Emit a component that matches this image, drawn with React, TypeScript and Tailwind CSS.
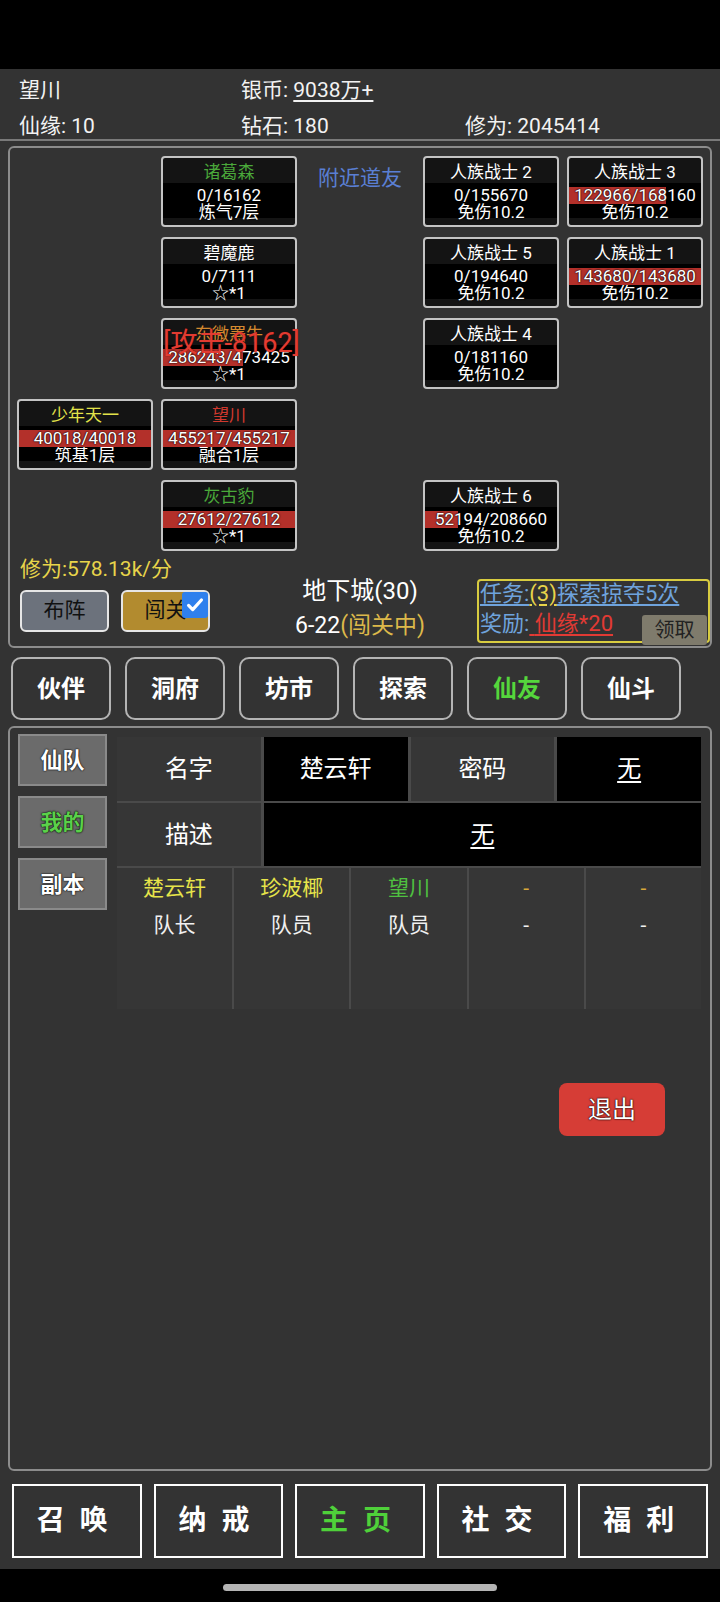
import React from "react";

type CardData = {
  col: string;
  row: string;
  name: string;
  color: string;
  hp: number;
  max: number;
  level: string;
  overlay?: string;
};

const cards: CardData[] = [
  { col: "col-start-2", row: "row-start-1", name: "诸葛森", color: "text-[#4aa83a]", hp: 0, max: 16162, level: "炼气7层" },
  { col: "col-start-4", row: "row-start-1", name: "人族战士 2", color: "text-white", hp: 0, max: 155670, level: "免伤10.2" },
  { col: "col-start-5", row: "row-start-1", name: "人族战士 3", color: "text-white", hp: 122966, max: 168160, level: "免伤10.2" },
  { col: "col-start-2", row: "row-start-2", name: "碧魔鹿", color: "text-white", hp: 0, max: 7111, level: "☆*1" },
  { col: "col-start-4", row: "row-start-2", name: "人族战士 5", color: "text-white", hp: 0, max: 194640, level: "免伤10.2" },
  { col: "col-start-5", row: "row-start-2", name: "人族战士 1", color: "text-white", hp: 143680, max: 143680, level: "免伤10.2" },
  { col: "col-start-2", row: "row-start-3", name: "东微罴牛", color: "text-[#d4892f]", hp: 286243, max: 473425, level: "☆*1", overlay: "[攻击-8162]" },
  { col: "col-start-4", row: "row-start-3", name: "人族战士 4", color: "text-white", hp: 0, max: 181160, level: "免伤10.2" },
  { col: "col-start-1", row: "row-start-4", name: "少年天一", color: "text-[#e3e34a]", hp: 40018, max: 40018, level: "筑基1层" },
  { col: "col-start-2", row: "row-start-4", name: "望川", color: "text-[#d0392e]", hp: 455217, max: 455217, level: "融合1层" },
  { col: "col-start-2", row: "row-start-5", name: "灰古豹", color: "text-[#4aa83a]", hp: 27612, max: 27612, level: "☆*1" },
  { col: "col-start-4", row: "row-start-5", name: "人族战士 6", color: "text-white", hp: 52194, max: 208660, level: "免伤10.2" },
];

function Card({ c }: { c: CardData }) {
  const pct = (c.hp / c.max) * 100;
  return (
    <div className={`${c.col} ${c.row} relative h-[71px] w-[136px] rounded-[4px] border-2 border-[#c4c4c4] bg-[#141414]`}>
      <div className={`h-[25px] pt-[3px] text-center text-[17px] leading-[22px] ${c.color}`}>{c.name}</div>
      <div className="h-[35px] bg-black pt-[4px]">
        <div className="relative h-[17px]">
          <div className="absolute left-0 top-0 h-full bg-[#b3302a]" style={{ width: `${pct}%` }} />
          <div className="relative text-center text-[17px] leading-[17px] text-white [text-shadow:0_0_2px_#000,0_0_1px_#000]">
            {c.hp}/{c.max}
          </div>
        </div>
        <div className="text-center text-[17px] leading-[17px] text-white [text-shadow:0_0_2px_#000]">{c.level}</div>
      </div>
      {c.overlay && (
        <div className="absolute left-1/2 top-[10px] -translate-x-1/2 whitespace-nowrap pl-[5px] text-[27px] leading-[27px] text-[#e23b31] [text-shadow:0_0_1px_#5a0d0a]">
          {c.overlay}
        </div>
      )}
    </div>
  );
}

const tabs = ["伙伴", "洞府", "坊市", "探索", "仙友", "仙斗"];
const navs = ["召唤", "纳戒", "主页", "社交", "福利"];

const members = [
  { name: "楚云轩", color: "text-[#e6e44a]", role: "队长" },
  { name: "珍波椰", color: "text-[#e6e44a]", role: "队员" },
  { name: "望川", color: "text-[#4fc040]", role: "队员" },
  { name: "-", color: "text-[#d8a83a]", role: "-" },
  { name: "-", color: "text-[#d8a83a]", role: "-" },
];

export default function App() {
  return (
    <div className="flex h-[1602px] w-[720px] flex-col overflow-hidden bg-black font-[family-name:Roboto,'Noto_Sans_CJK_SC',sans-serif] text-white">
      <div className="h-[69px] shrink-0 bg-black" />
      <div className="flex shrink-0 flex-col bg-[#333333]">
        {/* header */}
        <div className="h-[72px] border-b-2 border-[#7a7a7a] pl-[19px] pt-[3px] text-[21px] text-[#f2f2f2]">
          <div className="grid h-[36px] grid-cols-[222px_224px_1fr] items-center leading-[36px]">
            <div>望川</div>
            <div>
              银币: <span className="underline underline-offset-[3px]">9038万+</span>
            </div>
            <div />
          </div>
          <div className="grid h-[36px] grid-cols-[222px_224px_1fr] items-center leading-[36px]">
            <div>仙缘: 10</div>
            <div>钻石: 180</div>
            <div>修为: 2045414</div>
          </div>
        </div>

        {/* battle panel */}
        <div className="mx-[8px] mt-[5px] h-[502px] rounded-[6px] border-2 border-[#8c8c8c] bg-[#333333]">
          <div className="grid grid-cols-[136px_136px_110px_136px_136px] grid-rows-[71px_71px_71px_71px_71px] gap-x-[8px] gap-y-[10px] pl-[7px] pt-[8px]">
            {cards.map((c, i) => (
              <Card key={i} c={c} />
            ))}
            <div className="col-start-3 row-start-1 whitespace-nowrap pt-[7px] text-center text-[21px] leading-[30px] text-[#5a7fd4]">
              附近道友
            </div>
          </div>
          <div className="flex h-[95px]">
            <div className="ml-[10px] w-[223px]">
              <div className="mt-[6px] h-[24px] text-[21px] leading-[24px] text-[#e8d44a]">修为:578.13k/分</div>
              <div className="mt-[9px] flex gap-[12px]">
                <div className="flex h-[42px] w-[89px] items-center justify-center rounded-[6px] border-2 border-[#e6e6e6] bg-[#6c727c] text-[21px] text-[#111]">
                  布阵
                </div>
                <div className="relative flex h-[42px] w-[89px] items-center justify-center rounded-[6px] border-2 border-[#e6e6e6] bg-[#b28b2f] text-[21px] text-[#111]">
                  闯关
                  <div className="absolute right-0 top-0 flex h-[26px] w-[26px] items-center justify-center rounded-[3px] bg-[#2f80ed]">
                    <svg viewBox="0 0 24 24" className="h-[22px] w-[22px]" fill="none" stroke="white" strokeWidth="3.5" strokeLinecap="round" strokeLinejoin="round">
                      <path d="M5 12.5l4.5 4.5L19 6.5" />
                    </svg>
                  </div>
                </div>
              </div>
            </div>
            <div className="w-[234px] text-center">
              <div className="mt-[25px] h-[30px] text-[24px] leading-[30px]">地下城(30)</div>
              <div className="mt-[5px] h-[30px] text-[23px] leading-[30px]">
                6-22<span className="text-[#dcb84a]">(闯关中)</span>
              </div>
            </div>
            <div className="mt-[28px] h-[64px] w-[233px] rounded-[4px] border-2 border-[#d8cc40] pl-[1px] text-[22px]">
              <div className="h-[26px] whitespace-nowrap leading-[26px]">
                <span className="text-[#6fa3dc] underline underline-offset-[3px]">任务:</span>
                <span className="text-[#e8d44a] underline underline-offset-[3px]">(3)</span>
                <span className="text-[#6fa3dc] underline underline-offset-[3px]">探索掠夺5次</span>
              </div>
              <div className="flex h-[34px] items-center justify-between">
                <div className="whitespace-nowrap leading-[30px]">
                  <span className="text-[#6fa3dc]">奖励:</span>
                  <span className="text-[#e23a34] underline underline-offset-[3px]">{"\u00a0"}仙缘*20</span>
                </div>
                <div className="mb-[-4px] mr-[1px] flex h-[30px] w-[65px] shrink-0 items-center justify-center self-end rounded-[3px] bg-[#7f7b6c] text-[20px] text-[#222]">
                  领取
                </div>
              </div>
            </div>
          </div>
        </div>

        {/* tabs */}
        <div className="mt-[9px] flex h-[63px] gap-[14px] pl-[11px]">
          {tabs.map((t) => (
            <div
              key={t}
              className={`flex h-[63px] w-[100px] items-center justify-center rounded-[10px] border-2 border-[#b4b4b4] bg-[#333333] text-[24px] font-bold ${
                t === "仙友" ? "text-[#55d63c]" : "text-white"
              }`}
            >
              {t}
            </div>
          ))}
        </div>

        {/* main panel */}
        <div className="mx-[8px] mt-[6px] flex h-[745px] rounded-[6px] border-2 border-[#8c8c8c] bg-[#333333]">
          <div className="flex flex-col gap-[10px] pl-[8px] pt-[6px]">
            {["仙队", "我的", "副本"].map((s) => (
              <div
                key={s}
                className={`flex h-[52px] w-[89px] items-center justify-center border-2 border-[#8a8a8a] bg-[#6b6b6b] text-[22px] font-bold [text-shadow:0_0_2px_#000,0_0_1px_#000] ${
                  s === "我的" ? "text-[#5bd04a]" : "text-white"
                }`}
              >
                {s}
              </div>
            ))}
          </div>
          <div className="ml-[10px] w-[584px] pt-[9px]">
            <div className="flex flex-col gap-[2px] bg-[#4a4a4a] text-[24px]">
              <div className="grid h-[64px] grid-cols-4 gap-[3px]">
                <div className="flex items-center justify-center bg-[#363636]">名字</div>
                <div className="flex items-center justify-center bg-black">楚云轩</div>
                <div className="flex items-center justify-center bg-[#363636]">密码</div>
                <div className="flex items-center justify-center bg-black underline underline-offset-[4px]">无</div>
              </div>
              <div className="grid h-[63px] grid-cols-[143.75px_1fr] gap-[3px]">
                <div className="flex items-center justify-center bg-[#363636]">描述</div>
                <div className="flex items-center justify-center bg-black underline underline-offset-[4px]">无</div>
              </div>
              <div className="grid h-[141px] grid-cols-5 gap-[2px] text-[21px]">
                {members.map((m, i) => (
                  <div key={i} className="bg-[#363636] pt-[4px] text-center">
                    <div className={`h-[33px] leading-[33px] ${m.color}`}>{m.name}</div>
                    <div className="h-[40px] leading-[40px] text-[#f0f0f0]">{m.role}</div>
                  </div>
                ))}
              </div>
            </div>
            <div className="mt-[74px] flex justify-end pr-[36px]">
              <div className="flex h-[53px] w-[106px] items-center justify-center rounded-[8px] bg-[#d63d36] text-[24px] text-white [text-shadow:0_0_2px_#000,0_0_1px_#000]">
                退出
              </div>
            </div>
          </div>
        </div>

        {/* bottom nav */}
        <div className="mt-[13px] grid h-[74px] grid-cols-5 gap-[12px] px-[12px]">
          {navs.map((n) => (
            <div
              key={n}
              className={`flex items-center justify-center border-2 border-white bg-[#333333] text-[28px] font-bold tracking-[15px] ${
                n === "主页" ? "text-[#4fd13a]" : "text-white"
              }`}
            >
              <span className="pl-[6px]">{n}</span>
            </div>
          ))}
        </div>
        <div className="h-[11px]" />
      </div>
      <div className="flex flex-1 justify-center bg-black">
        <div className="mt-[15px] h-[7px] w-[274px] rounded-full bg-[#b4b4b4]" />
      </div>
    </div>
  );
}
